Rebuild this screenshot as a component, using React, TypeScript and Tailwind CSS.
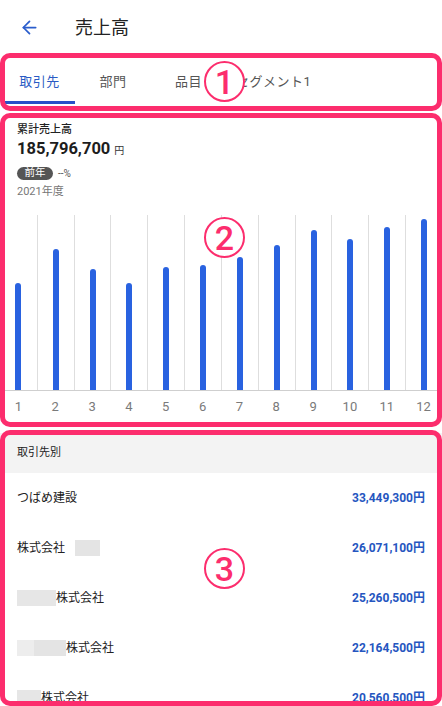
import { ArrowLeft } from "lucide-react";

/* ─── Data ─── */
const tabs = [
  { label: "取引先", cls: "w-[71px]", active: true },
  { label: "部門", cls: "w-[76px]", active: false },
  { label: "品目", cls: "w-[75px]", active: false },
  { label: "セグメント1", cls: "px-[10px]", active: false },
];

// bar heights in px (chart area is 176px tall)
const bars = [107, 141, 121, 107, 123, 125, 133, 145, 160, 151, 163, 171];

type Row = { pre?: string[]; name: string; post?: number; amount: string };

const rows: Row[] = [
  { name: "つばめ建設", amount: "33,449,300円" },
  { name: "株式会社", post: 25, amount: "26,071,100円" },
  { pre: ["w-[39px] bg-[#e6e6e6]"], name: "株式会社", amount: "25,260,500円" },
  { pre: ["w-[17px] bg-[#ededed]", "w-[32px] bg-[#e4e4e4]"], name: "株式会社", amount: "22,164,500円" },
  { pre: ["w-[24px] bg-[#e6e6e6]"], name: "株式会社", amount: "20,560,500円" },
];

/* ─── Annotation overlays ─── */
function Frame({ cls }: { cls: string }) {
  return (
    <div
      className={`pointer-events-none absolute left-0 w-[442px] rounded-[10px] border-[5px] border-[#fc2d6d] ${cls}`}
    />
  );
}

function Marker({ n, cls }: { n: number; cls: string }) {
  return (
    <div
      className={`pointer-events-none absolute left-[204px] flex h-[41px] w-[41px] items-center justify-center rounded-full border-[2.5px] border-[#fc2d6d] bg-white ${cls}`}
    >
      <span className="text-[34px] font-medium leading-none text-[#fc2d6d] [font-family:Roboto,sans-serif]">
        {n}
      </span>
    </div>
  );
}

export default function App() {
  return (
    <div className="relative h-[706px] w-[442px] overflow-hidden bg-white text-[#222] [font-family:Roboto,'Noto_Sans_CJK_JP',sans-serif]">
      {/* Header */}
      <div className="flex h-[54px] items-center">
        <ArrowLeft className="ml-[19px] h-[21px] w-[21px] text-[#2a5dcc]" strokeWidth={2} />
        <h1 className="ml-[35px] text-[18px] font-normal text-[#222]">売上高</h1>
      </div>

      {/* Tabs */}
      <div className="flex h-[51px] pl-[4px]">
        {tabs.map((t) => (
          <div
            key={t.label}
            className={`relative flex items-center justify-center pt-[5px] text-[13px] tracking-[0.5px] ${t.cls} ${
              t.active ? "text-[#2a5bc4]" : "text-[#555]"
            }`}
          >
            {t.label}
            {t.active && <div className="absolute bottom-[1px] left-0 h-[3px] w-full bg-[#2750c8]" />}
          </div>
        ))}
      </div>

      {/* Summary */}
      <div className="flex flex-col px-[17px] pt-[17px]">
        <p className="text-[11px] font-medium leading-[16px] text-[#222]">累計売上高</p>
        <p className="mt-[1px] flex items-baseline gap-[4px] leading-[20px]">
          <span className="text-[16.5px] font-bold text-[#1d1d1d]">185,796,700</span>
          <span className="text-[10px] text-[#333]">円</span>
        </p>
        <div className="mt-[5px] flex h-[14px] items-center gap-[5px]">
          <span className="flex h-[13px] w-[36px] items-center justify-center rounded-full bg-[#555] text-[10.5px] text-white">
            前年
          </span>
          <span className="text-[10px] text-[#555]">--%</span>
        </div>
        <p className="mt-[5px] text-[11px] leading-[14px] text-[#777]">2021年度</p>
      </div>

      {/* Chart */}
      <div className="mt-[16px] grid h-[176px] grid-cols-12 border-b border-[#cfcfcf]">
        {bars.map((h, i) => (
          <div
            key={i}
            className={`flex items-end justify-center ${i > 0 ? "border-l border-[#dedede]" : ""}`}
          >
            <div className="w-[6px] rounded-t-[3px] bg-[#2962e0]" style={{ height: h }} />
          </div>
        ))}
      </div>
      <div className="grid h-[32px] grid-cols-12">
        {bars.map((_, i) => (
          <div key={i} className="flex items-center justify-center text-[13px] text-[#7a7a7a]">
            {i + 1}
          </div>
        ))}
      </div>

      {/* List */}
      <div className="mt-[10px]">
        <div className="flex h-[40px] items-center bg-[#f3f3f3] px-[17px] text-[11px] text-[#222]">
          取引先別
        </div>
        {rows.map((r, i) => (
          <div key={i} className="flex h-[50px] items-center justify-between px-[17px]">
            <div className="flex items-center">
              {r.pre?.map((c, j) => (
                <div key={j} className={`h-[16px] ${c}`} />
              ))}
              <span className="text-[12px] font-normal text-[#222]">{r.name}</span>
              {r.post && <div className="ml-[10px] h-[16px] w-[25px] bg-[#e4e4e4]" />}
            </div>
            <span className="text-[12px] font-bold text-[#2556c0]">{r.amount}</span>
          </div>
        ))}
      </div>

      {/* Annotations */}
      <Frame cls="top-[53px] h-[58px]" />
      <Frame cls="top-[113px] h-[314px]" />
      <Frame cls="top-[430px] h-[276px]" />
      <Marker n={1} cls="top-[61px]" />
      <Marker n={2} cls="top-[217px]" />
      <Marker n={3} cls="top-[548px]" />
    </div>
  );
}
